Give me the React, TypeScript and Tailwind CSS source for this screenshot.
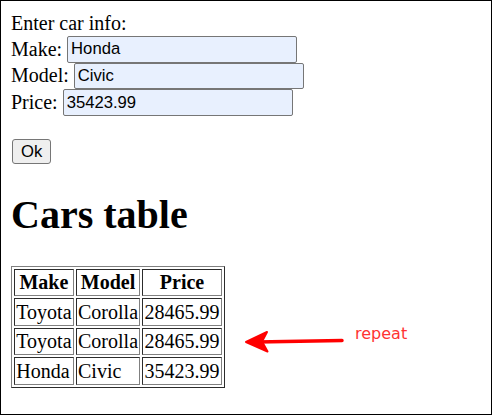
import React from 'react';

const cars = [
  { make: 'Toyota', model: 'Corolla', price: '28465.99' },
  { make: 'Toyota', model: 'Corolla', price: '28465.99' },
  { make: 'Honda', model: 'Civic', price: '35423.99' },
];

const fields = [
  { label: 'Make:', value: 'Honda' },
  { label: 'Model:', value: 'Civic' },
  { label: 'Price:', value: '35423.99' },
];

export default function App() {
  return (
    <div className="relative w-[492px] h-[415px] border border-black bg-white pt-[11px] pl-[10px] text-black text-[20px] leading-[23px] font-['Liberation_Serif','Times_New_Roman',serif]">
      {/* Form */}
      <div className="h-[24px]">Enter car info:</div>
      {fields.map((f) => (
        <div key={f.label} className="flex items-center h-[26.67px]">
          <span>{f.label}</span>
          <input
            readOnly
            value={f.value}
            className="ml-[5px] w-[230px] h-[26.67px] border border-[#767676] rounded-[2px] bg-[#e8f0fe] pl-[3px] text-[16.67px] text-black font-['Liberation_Sans',Arial,sans-serif] outline-none"
          />
        </div>
      ))}
      <div className="h-[23px]" />
      <button className="block ml-[1px] h-[25px] px-[8px] border border-[#767676] rounded-[3px] bg-[#efefef] text-[16.67px] leading-[19px] font-['Liberation_Sans',Arial,sans-serif]">
        Ok
      </button>

      {/* Table */}
      <h1 className="mt-[28px] mb-[28px] text-[40px] leading-[46px] font-bold">Cars table</h1>
      <table className="border-separate border-spacing-[2.5px] border border-[#808080] [border-style:outset]">
        <thead>
          <tr>
            {['Make', 'Model', 'Price'].map((h) => (
              <th key={h} className="p-[1.25px] border border-[#808080] [border-style:inset] font-bold text-center">
                {h}
              </th>
            ))}
          </tr>
        </thead>
        <tbody>
          {cars.map((c, i) => (
            <tr key={i}>
              <td className="p-[1.25px] border border-[#808080] [border-style:inset]">{c.make}</td>
              <td className="p-[1.25px] border border-[#808080] [border-style:inset]">{c.model}</td>
              <td className="p-[1.25px] border border-[#808080] [border-style:inset]">{c.price}</td>
            </tr>
          ))}
        </tbody>
      </table>

      {/* Annotation */}
      <svg className="absolute left-[240px] top-[325px]" width="110" height="32" viewBox="240 325 110 32">
        <path d="M245 341 L266 331 L261 340.5 L266.5 350.5 Z" fill="#ff0000" stroke="#ff0000" strokeWidth="2" strokeLinejoin="round" />
        <path d="M256 341 L341 339.5" stroke="#ff0000" strokeWidth="3.5" strokeLinecap="round" />
      </svg>
      <span className="absolute left-[354px] top-[323px] text-[16px] leading-[19px] text-[#ff3333] font-['DejaVu_Sans',sans-serif]">
        repeat
      </span>
    </div>
  );
}
